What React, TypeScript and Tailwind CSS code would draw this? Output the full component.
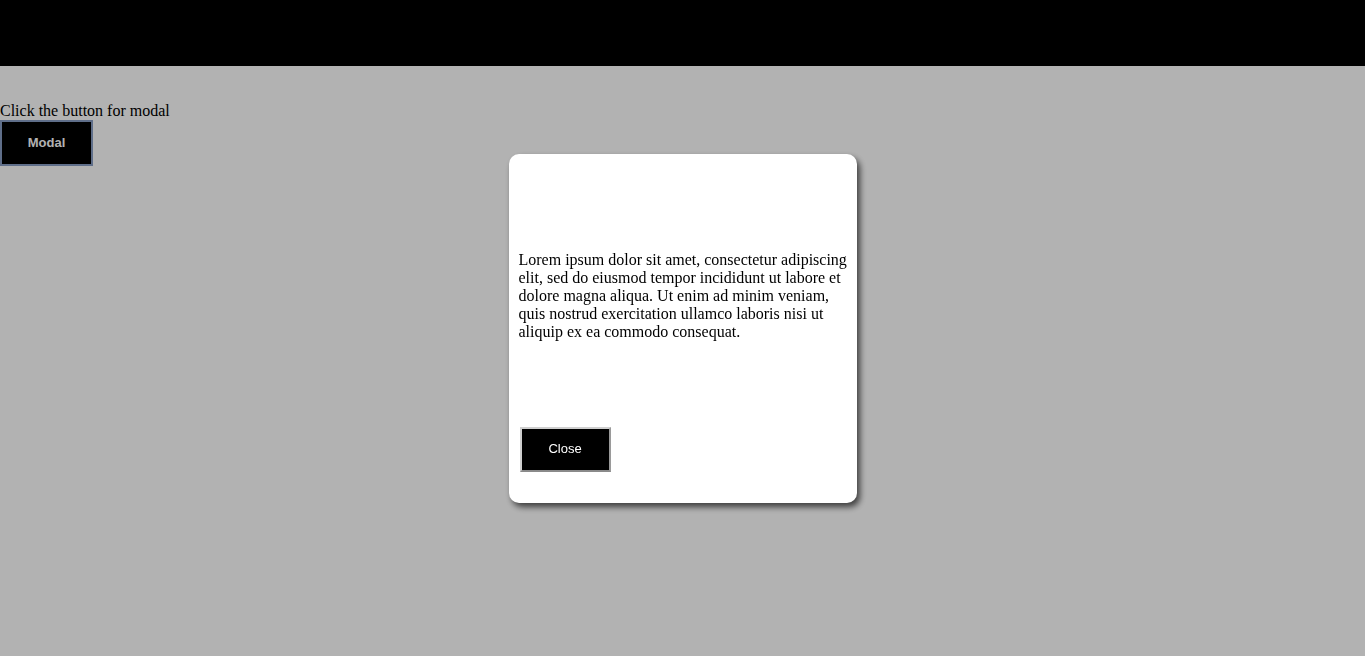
import React from "react"

const App = () => {
  const [open, setOpen] = React.useState(true)

  return (
    <div className="min-h-screen bg-white font-['Liberation_Serif',serif] text-base text-black">
      <div className="h-[66px] bg-black" />
      <div className="pt-[36px]">
        <p className="leading-[18px]">Click the button for modal</p>
        <button
          onClick={() => setOpen(true)}
          className="h-[46px] w-[93px] border-2 border-[#889ec4] bg-black font-['Liberation_Sans',Arial,sans-serif] text-[13px] font-bold text-white"
        >
          Modal
        </button>
      </div>

      {open && (
        <div className="fixed inset-0 flex items-center justify-center bg-black/30">
          <div className="flex h-[349px] w-[348px] flex-col rounded-[10px] bg-white pl-[10px] pr-[6px] shadow-[3px_4px_6px_rgba(0,0,0,0.65)]">
            <div className="h-[97px] shrink-0" />
            <p className="leading-[18px]">
              Lorem ipsum dolor sit amet, consectetur adipiscing elit, sed do
              eiusmod tempor incididunt ut labore et dolore magna aliqua. Ut
              enim ad minim veniam, quis nostrud exercitation ullamco laboris
              nisi ut aliquip ex ea commodo consequat.
            </p>
            <div className="flex-1" />
            <div className="pb-[31px] pl-[1px]">
              <button
                onClick={() => setOpen(false)}
                className="h-[45px] w-[91px] border-2 border-[#cfcfcf] border-b-[#8a8a8a] border-r-[#9a9a9a] bg-black font-['Liberation_Sans',Arial,sans-serif] text-[13px] font-medium text-white"
              >
                Close
              </button>
            </div>
          </div>
        </div>
      )}
    </div>
  )
}

export default App
